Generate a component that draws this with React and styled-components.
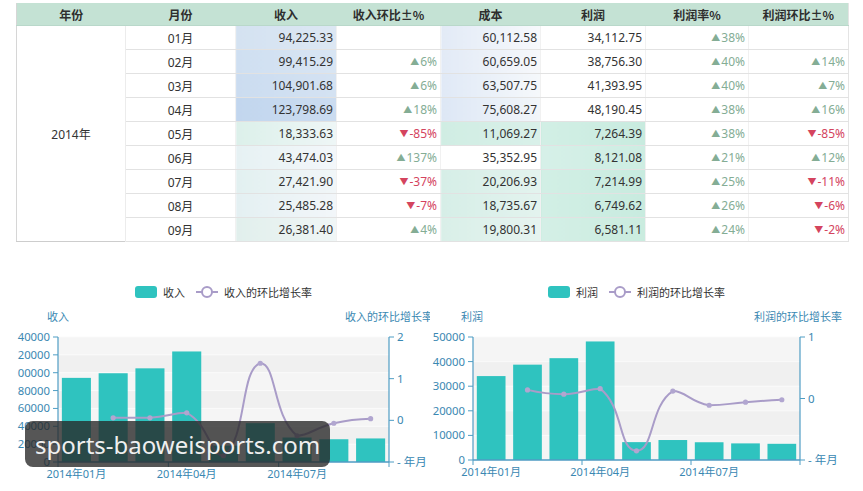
import React from 'react';
import styled, { createGlobalStyle } from 'styled-components';

const GlobalStyle = createGlobalStyle`
  html, body { margin: 0; padding: 0; background: #fff; }
  body { font-family: "Noto Sans", "Noto Sans CJK SC", sans-serif; }
`;

const Page = styled.div`
  position: relative;
  width: 863px;
  height: 491px;
  overflow: hidden;
  background: #fff;
`;

const TableWrap = styled.div`
  padding: 3px 0 0 16px;
`;

const DataTable = styled.table`
  border-collapse: collapse;
  table-layout: fixed;
  width: 832px;
  font-family: "Noto Sans", "Noto Sans CJK SC", sans-serif;
  font-size: 12px;
  color: #333;
  border-left: 1px solid #d6d6d6;
  border-bottom: 1px solid #cdcdcd;
  border-right: 1px solid #e4e4e4;
`;

const HeadCell = styled.th`
  height: 22px;
  padding: 0;
  background: #c4e2d4;
  font-family: "Noto Sans CJK SC", sans-serif;
  font-weight: 700;
  font-size: 12px;
  color: #2e2e2e;
  text-align: center;
  border-bottom: 1px solid #b9d8ca;
`;

const Cell = styled.td`
  height: 23px;
  padding: 0 3px;
  background: ${(p) => p.$bg || '#fff'};
  text-align: ${(p) => p.$align || 'right'};
  border-bottom: 1px solid #e2e2e2;
  border-left: 1px solid #f1f1f1;
  white-space: nowrap;
  font-family: "Noto Sans", "Noto Sans CJK SC", sans-serif;
`;

const YearCell = styled.td`
  padding: 0;
  text-align: center;
  vertical-align: middle;
  background: #fff;
  border-right: 1px solid #ececec;
  font-family: "Noto Sans", "Noto Sans CJK SC", sans-serif;
`;

const Change = styled.span`
  color: ${(p) => (p.$down ? '#d4445e' : '#84ad95')};
`;

const Arrow = styled.span`
  font-size: 9px;
  margin-right: 1px;
  vertical-align: 1px;
`;

const ChartsRow = styled.div`
  display: flex;
  margin-top: 39px;
`;

const ChartPanel = styled.div`
  width: ${(p) => p.$w}px;
  display: flex;
  flex-direction: column;
`;

const Legend = styled.div`
  height: 22px;
  display: flex;
  align-items: center;
  padding-left: ${(p) => p.$offset}px;
  font-family: "Noto Sans CJK SC", sans-serif;
  font-size: 11px;
  color: #333;
`;

const LegendItem = styled.div`
  display: flex;
  align-items: center;
  gap: 6px;
  margin-right: 11px;
`;

const Swatch = styled.span`
  width: 22px;
  height: 12px;
  border-radius: 3px;
  background: #2fc3bf;
`;

const Watermark = styled.div`
  position: absolute;
  left: 25px;
  top: 421px;
  width: 305px;
  height: 46px;
  border-radius: 8px;
  background: rgba(38, 38, 38, 0.78);
  display: flex;
  align-items: center;
  padding-left: 10px;
  box-sizing: border-box;
  color: #efefef;
  font-family: "Noto Sans", sans-serif;
  font-size: 24px;
`;

const months = ['01', '02', '03', '04', '05', '06', '07', '08', '09'];
const revenue = [94225.33, 99415.29, 104901.68, 123798.69, 18333.63, 43474.03, 27421.9, 25485.28, 26381.4];
const revChg = [null, 6, 6, 18, -85, 137, -37, -7, 4];
const cost = [60112.58, 60659.05, 63507.75, 75608.27, 11069.27, 35352.95, 20206.93, 18735.67, 19800.31];
const profit = [34112.75, 38756.3, 41393.95, 48190.45, 7264.39, 8121.08, 7214.99, 6749.62, 6581.11];
const margin = [38, 40, 40, 38, 38, 21, 25, 26, 24];
const profitChg = [null, 14, 7, 16, -85, 12, -11, -6, -2];

const revBg = [
  'linear-gradient(90deg,#d4e2f1,#dce7f3)',
  'linear-gradient(90deg,#cfdff1,#d8e5f3)',
  'linear-gradient(90deg,#cbdcf0,#d4e2f2)',
  'linear-gradient(90deg,#c2d6ee,#cbdcf0)',
  'linear-gradient(90deg,#dcf0ea,#eef6f6)',
  'linear-gradient(90deg,#e6f1f3,#f3f7fa)',
  'linear-gradient(90deg,#e2f0f0,#f1f6f8)',
  'linear-gradient(90deg,#e4f0f2,#f2f6f9)',
  'linear-gradient(90deg,#e1efec,#f0f6f6)',
];
const costBg = [
  'linear-gradient(90deg,#e2eaf6,#f7f9fc)',
  'linear-gradient(90deg,#e2eaf6,#f6f8fb)',
  'linear-gradient(90deg,#e0e9f6,#f5f8fb)',
  'linear-gradient(90deg,#dde7f5,#f2f6fa)',
  'linear-gradient(90deg,#d0ede3,#d9f0e9)',
  '#ffffff',
  'linear-gradient(90deg,#d6eee7,#e3f3ee)',
  'linear-gradient(90deg,#d6eee7,#e3f3ee)',
  'linear-gradient(90deg,#d9efe8,#e6f4f0)',
];
const profitBg = [
  '#fff', '#fff', '#fff', '#fff',
  'linear-gradient(90deg,#d2efe5,#c8ebdf)',
  'linear-gradient(90deg,#d6f0e8,#cdede2)',
  'linear-gradient(90deg,#d2efe5,#c8ebdf)',
  'linear-gradient(90deg,#d2efe5,#c8ebdf)',
  'linear-gradient(90deg,#d4efe6,#caecdf)',
];

const fmt = (n) =>
  n.toLocaleString('en-US', { minimumFractionDigits: 2, maximumFractionDigits: 2 });

function Pct({ v }) {
  if (v === null) return null;
  const down = v < 0;
  return (
    <Change $down={down}>
      <Arrow>{down ? '▼' : '▲'}</Arrow>
      {v}%
    </Change>
  );
}

const colWidths = [109, 110, 101, 104, 100, 105, 103, 100];
const headers = ['年份', '月份', '收入', '收入环比±%', '成本', '利润', '利润率%', '利润环比±%'];

function ReportTable() {
  return (
    <DataTable>
      <colgroup>
        {colWidths.map((w, i) => (
          <col key={i} style={{ width: w }} />
        ))}
      </colgroup>
      <thead>
        <tr>
          {headers.map((h) => (
            <HeadCell key={h}>{h}</HeadCell>
          ))}
        </tr>
      </thead>
      <tbody>
        {months.map((m, i) => (
          <tr key={m}>
            {i === 0 && <YearCell rowSpan={9}>2014年</YearCell>}
            <Cell $align="center">{m}月</Cell>
            <Cell $bg={revBg[i]}>{fmt(revenue[i])}</Cell>
            <Cell><Pct v={revChg[i]} /></Cell>
            <Cell $bg={costBg[i]}>{fmt(cost[i])}</Cell>
            <Cell $bg={profitBg[i]}>{fmt(profit[i])}</Cell>
            <Cell><Pct v={margin[i]} /></Cell>
            <Cell><Pct v={profitChg[i]} /></Cell>
          </tr>
        ))}
      </tbody>
    </DataTable>
  );
}

function smoothPath(pts, smooth = 0.5) {
  const cps = pts.map((p, i) => {
    if (i === 0 || i === pts.length - 1) return { in: p, out: p };
    const prev = pts[i - 1];
    const next = pts[i + 1];
    const vx = next[0] - prev[0];
    const vy = next[1] - prev[1];
    const d0 = Math.hypot(p[0] - prev[0], p[1] - prev[1]);
    const d1 = Math.hypot(next[0] - p[0], next[1] - p[1]);
    const r = d1 / (d0 + d1);
    let ox = p[0] + vx * smooth * r;
    let oy = p[1] + vy * smooth * r;
    let ix = p[0] - vx * smooth * (1 - r);
    let iy = p[1] - vy * smooth * (1 - r);
    ox = Math.min(ox, Math.max(next[0], p[0]));
    ox = Math.max(ox, Math.min(next[0], p[0]));
    oy = Math.min(oy, Math.max(next[1], p[1]));
    oy = Math.max(oy, Math.min(next[1], p[1]));
    ix = Math.min(ix, Math.max(prev[0], p[0]));
    ix = Math.max(ix, Math.min(prev[0], p[0]));
    iy = Math.min(iy, Math.max(prev[1], p[1]));
    iy = Math.max(iy, Math.min(prev[1], p[1]));
    return { in: [ix, iy], out: [ox, oy] };
  });
  let d = `M${pts[0][0]},${pts[0][1]}`;
  for (let i = 0; i < pts.length - 1; i++) {
    const a = cps[i].out;
    const b = cps[i + 1].in;
    const n = pts[i + 1];
    d += ` C${a[0]},${a[1]} ${b[0]},${b[1]} ${n[0]},${n[1]}`;
  }
  return d;
}

const AXIS = '#4f9dc4';
const LABEL = '#3a88b2';
const FONT = '"Noto Sans", "Noto Sans CJK SC", sans-serif';

function Chart({ vx, w, cfg }) {
  const { xL, xR, yTop, yBot, leftLabels, leftMax, rMin, rMax, rLabels, bars, line, leftTitle, leftTitleX, rightTitle, rightTitleX } = cfg;
  const cat = (xR - xL) / 9;
  const cx = (i) => xL + cat * (i + 0.5);
  const yLeft = (v) => yBot - (v / leftMax) * (yBot - yTop);
  const yRight = (v) => yBot - ((v - rMin) / (rMax - rMin)) * (yBot - yTop);
  const nTicks = leftLabels.length - 1;
  const step = (yBot - yTop) / nTicks;
  const pts = line.map((v, i) => (v === null ? null : [cx(i), yRight(v / 100)])).filter(Boolean);
  const barW = cat * 0.79;
  return (
    <svg width={w} height={189} viewBox={`${vx} 302 ${w} 189`} style={{ display: 'block' }}>
      {Array.from({ length: nTicks }).map((_, k) => (
        <rect
          key={k}
          x={xL}
          y={yTop + k * step}
          width={xR - xL}
          height={step}
          fill={k % 2 === 0 ? '#f5f5f5' : '#f0f0f0'}
        />
      ))}
      {Array.from({ length: nTicks + 1 }).map((_, k) => (
        <line key={k} x1={xL} x2={xR} y1={yTop + k * step} y2={yTop + k * step} stroke="#fafafa" strokeWidth="1" />
      ))}
      {bars.map((v, i) => (
        <rect key={i} x={cx(i) - barW / 2} y={yLeft(v)} width={barW} height={yBot - yLeft(v)} fill="#2fc3bf" />
      ))}
      <path d={smoothPath(pts)} fill="none" stroke="#a99cc8" strokeWidth="2" />
      {pts.map((p, i) => (
        <circle key={i} cx={p[0]} cy={p[1]} r="2.6" fill="#b1a6d0" />
      ))}
      <line x1={xL} x2={xL} y1={yTop} y2={yBot} stroke={AXIS} strokeWidth="1.2" />
      <line x1={xR} x2={xR} y1={yTop} y2={yBot} stroke={AXIS} strokeWidth="1.2" />
      <line x1={xL} x2={xR} y1={yBot} y2={yBot} stroke={AXIS} strokeWidth="1.4" />
      {leftLabels.map((t, k) => {
        const y = yBot - k * step;
        return (
          <g key={k}>
            <line x1={xL - 5} x2={xL} y1={y} y2={y} stroke={AXIS} />
            <text x={xL - 8} y={y + 4} textAnchor="end" fontSize="11.3" fill={LABEL} fontFamily={FONT}>
              {t}
            </text>
          </g>
        );
      })}
      {rLabels.map((t, k) => {
        const y = yRight(t.v);
        return (
          <g key={k}>
            <line x1={xR} x2={xR + 5} y1={y} y2={y} stroke={AXIS} />
            {t.label && (
              <text x={xR + 8} y={y + 4} fontSize="11.5" fill={LABEL} fontFamily={FONT}>
                {t.label}
              </text>
            )}
          </g>
        );
      })}
      <text x={xR + 8} y={yBot + 4} fontSize="11.5" fill={LABEL} fontFamily={FONT}>
        - 年月
      </text>
      {[0, 3, 6, 9].map((k) => (
        <line key={k} x1={xL + k * cat} x2={xL + k * cat} y1={yBot} y2={yBot + 5} stroke={AXIS} />
      ))}
      {[0, 3, 6].map((k) => (
        <text key={k} x={cx(k)} y={yBot + 16} textAnchor="middle" fontSize="11" fill={LABEL} fontFamily={FONT}>
          2014年{months[k]}月
        </text>
      ))}
      <text x={leftTitleX} y={320} fontSize="11" fill={LABEL} fontFamily={FONT}>
        {leftTitle}
      </text>
      <text x={rightTitleX} y={320} fontSize="11" fill={LABEL} fontFamily={FONT}>
        {rightTitle}
      </text>
    </svg>
  );
}

const leftCfg = {
  xL: 58,
  xR: 389,
  yTop: 336,
  yBot: 461,
  leftLabels: ['0', '20000', '40000', '60000', '80000', '00000', '20000', '40000'],
  leftMax: 140000,
  rMin: -1,
  rMax: 2,
  rLabels: [{ v: 2, label: '2' }, { v: 1, label: '1' }, { v: 0, label: '0' }, { v: -1 }],
  bars: revenue,
  line: revChg,
  leftTitle: '收入',
  leftTitleX: 47,
  rightTitle: '收入的环比增长率',
  rightTitleX: 345,
};

const rightCfg = {
  xL: 473,
  xR: 800,
  yTop: 336,
  yBot: 459,
  leftLabels: ['0', '10000', '20000', '30000', '40000', '50000'],
  leftMax: 50000,
  rMin: -1,
  rMax: 1,
  rLabels: [{ v: 1, label: '1' }, { v: 0, label: '0' }, { v: -1 }],
  bars: profit,
  line: profitChg,
  leftTitle: '利润',
  leftTitleX: 461,
  rightTitle: '利润的环比增长率',
  rightTitleX: 754,
};

function LineIcon() {
  return (
    <svg width="22" height="14" viewBox="0 0 22 14">
      <line x1="0" x2="22" y1="7" y2="7" stroke="#a99cc8" strokeWidth="2" />
      <circle cx="11" cy="7" r="5" fill="#fff" stroke="#a99cc8" strokeWidth="2" />
    </svg>
  );
}

function ChartLegend({ offset, bar, line }) {
  return (
    <Legend $offset={offset}>
      <LegendItem>
        <Swatch />
        <span>{bar}</span>
      </LegendItem>
      <LegendItem>
        <LineIcon />
        <span>{line}</span>
      </LegendItem>
    </Legend>
  );
}

export default function App() {
  return (
    <Page>
      <GlobalStyle />
      <TableWrap>
        <ReportTable />
      </TableWrap>
      <ChartsRow>
        <ChartPanel $w={430}>
          <ChartLegend offset={135} bar="收入" line="收入的环比增长率" />
          <Chart vx={0} w={430} cfg={leftCfg} />
        </ChartPanel>
        <ChartPanel $w={433}>
          <ChartLegend offset={118} bar="利润" line="利润的环比增长率" />
          <Chart vx={430} w={433} cfg={rightCfg} />
        </ChartPanel>
      </ChartsRow>
      <Watermark>sports-baoweisports.com</Watermark>
    </Page>
  );
}
